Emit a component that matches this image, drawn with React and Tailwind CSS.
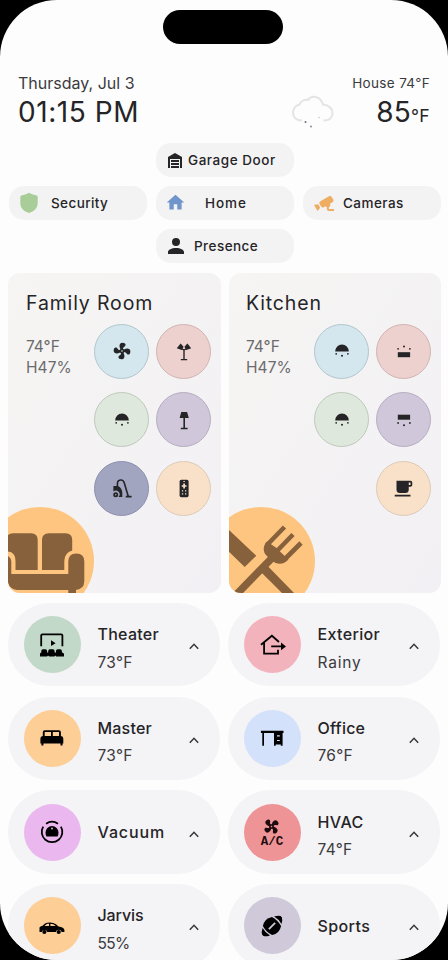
import React from "react";

const Svg = ({ size = 24, box = 24, className = "", children }) => (
  <svg width={size} height={size} viewBox={`0 0 ${box} ${box}`} className={`shrink-0 ${className}`} fill="currentColor">
    {children}
  </svg>
);

const FAN =
  "M12,11A1,1 0 0,0 11,12A1,1 0 0,0 12,13A1,1 0 0,0 13,12A1,1 0 0,0 12,11M12.5,2C17,2 17.11,5.57 14.75,6.75C13.76,7.24 13.32,8.29 13.13,9.22C13.61,9.42 14.03,9.73 14.35,10.13C18.05,8.13 22.03,8.92 22.03,12.5C22.03,17 18.46,17.1 17.28,14.73C16.78,13.74 15.72,13.3 14.79,13.11C14.59,13.59 14.28,14 13.88,14.34C15.87,18.03 15.08,22 11.5,22C7,22 6.91,18.42 9.27,17.24C10.25,16.75 10.69,15.71 10.89,14.79C10.4,14.59 9.97,14.27 9.65,13.87C5.96,15.85 2,15.07 2,11.5C2,7 5.56,6.89 6.74,9.26C7.24,10.25 8.29,10.68 9.22,10.87C9.41,10.39 9.73,9.97 10.14,9.65C8.15,5.96 8.94,2 12.5,2Z";

const Garage = () => (
  <Svg><path d="M19,20H17V11H7V20H5V9L12,5L19,9V20M8,12H16V14H8V12M8,15H16V17H8V15M16,18V20H8V18H16Z" /></Svg>
);
const Shield = () => (
  <Svg className="text-[#a8cd98]"><path d="M12,1.8C14.5,3.4 17.5,4.2 19.6,4.4Q20.7,4.6 20.7,5.800V12C20.7,16.8 17.2,20.6 12,22C6.800,20.6 3.3,16.8 3.3,12V5.8Q3.3,4.6 4.400,4.4C6.500,4.2 9.5,3.4 12,1.8Z" /></Svg>
);
const House = () => (
  <Svg size={21} className="text-[#7095cb]"><path d="M10,20V14H14V20H19V12H22L12,3L2,12H5V20H10Z" /></Svg>
);
const Camera = () => (
  <Svg size={24} className="text-[#efad62]">
    <path d="M18.15,4.94C17.77,4.91 17.37,5 17,5.2L8.35,10.2C7.39,10.76 7.07,12 7.62,12.94L9.12,15.53C9.67,16.5 10.89,16.82 11.85,16.27L13.65,15.23C13.92,15.69 14.32,16.06 14.81,16.27V18.04C14.81,19.13 15.7,20 16.81,20H22V18.04H16.81V16.27C17.72,15.87 18.31,14.97 18.31,14C18.31,13.54 18.19,13.11 17.97,12.73L20.5,11.27C21.47,10.71 21.8,9.5 21.24,8.53L19.74,5.94C19.4,5.34 18.79,5 18.15,4.94M6.22,13.17L2,13.87L2.75,15.17L4.75,18.63L5.5,19.93L8.22,16.63L6.22,13.17Z" />
  </Svg>
);
const Person = () => (
  <Svg size={24}><path d="M12,4A4,4 0 0,1 16,8A4,4 0 0,1 12,12A4,4 0 0,1 8,8A4,4 0 0,1 12,4M12,14C16.42,14 20,15.79 20,18V20H4V18C4,15.79 7.58,14 12,14Z" /></Svg>
);

const Fan = () => <Svg size={20}><path d={FAN} /></Svg>;
const TwinLamp = () => (
  <Svg>
    <path d="M8.6,4.6L4.8,9.3L9.6,11L11.6,7.8ZM15.4,4.6L19.2,9.300L14.4,11L12.4,7.8Z" />
    <path d="M9.6,9.600L12,11L14.4,9.6M12,11V20.5M8.8,20.6H15.2" stroke="currentColor" strokeWidth="1.4" fill="none" />
  </Svg>
);
const Dome = () => (
  <Svg>
    <path d="M5.2,12.6A6.8,7.2 0 0,1 18.8,12.6Z" />
    <circle cx="6.2" cy="14.8" r="0.9" /><circle cx="12" cy="16.7" r="1" /><circle cx="17.900" cy="14.8" r="0.9" />
  </Svg>
);
const FloorLamp = () => (
  <Svg><path d="M9.3,4H15.1L16.8,10.1H7.6ZM11.4,10H13V19.8H15.600V21.2H8.8V19.8H11.4Z" /></Svg>
);
const Hoover = () => (
  <Svg>
    <path fillRule="evenodd" d="M3.4,10H7C10.5,10.5 12.3,13.5 12.3,17V20.9H8.4A3.400,3.400 0 1,0 3.4,15.600ZM5.700,16.2A2.500,2.500 0 1,1 5.7,21.2A2.5,2.5 0 1,1 5.7,16.2M5.7,17.9A0.800,0.800 0 1,0 5.7,19.500A0.8,0.8 0 1,0 5.7,17.9" />
    <path d="M7.4,11V8C7.4,3 13.2,2.800 14.3,7L18.3,20.4M15.8,20.600H21.600" stroke="currentColor" strokeWidth="1.6" fill="none" />
  </Svg>
);
const Remote = () => (
  <Svg>
    <rect x="7.600" y="3.8" width="9" height="17.4" rx="1.6" />
    <path d="M12.1,7.6V12.4M9.7,10H14.5" stroke="#f9e1c9" strokeWidth="1.7" />
    <path d="M9.9,14.3H11.2V15.6H9.9ZM13,14.3H14.3V15.6H13ZM9.900,17.2H11.2V18.5H9.9ZM13,17.2H14.3V18.5H13ZM11.4,5H12.8V6H11.4Z" fill="#f9e1c9" />
  </Svg>
);
const UpLight = () => (
  <Svg>
    <rect x="5.800" y="13.2" width="12.300" height="5" />
    <circle cx="6.1" cy="9.8" r="0.9" /><circle cx="12" cy="7.6" r="1" /><circle cx="17.9" cy="9.8" r="0.9" />
  </Svg>
);
const DownLight = () => (
  <Svg>
    <rect x="5.8" y="6.7" width="12.3" height="5" />
    <circle cx="6.1" cy="15" r="0.9" /><circle cx="12" cy="17.2" r="1" /><circle cx="17.9" cy="15" r="0.900" />
  </Svg>
);
const Cup = () => (
  <Svg size={21}><path d="M2,21H20V19H2M20,8H18V5H20M20,3H4V13A4,4 0 0,0 8,17H14A4,4 0 0,0 18,13V10H20A2,2 0 0,0 22,8V5C22,3.89 21.1,3 20,3Z" /></Svg>
);

const Theater = () => (
  <Svg size={28} box={28}>
    <path d="M3.2,15.300V4.5Q3.2,3.300 4.4,3.3H23.2Q24.4,3.3 24.4,4.5V15.300" stroke="currentColor" strokeWidth="1.800" fill="none" />
    <path d="M13,9.300L17.6,12.2L13,15Z" />
    <path d="M2,25.5V23.2Q2,21.6 3.300,21.600V20Q3.3,18.3 5,18.3H7.4Q9.1,18.3 9.1,20V21.6H10.200V20Q10.2,18.3 11.900,18.3H14.9Q16.6,18.3 16.6,20V21.6H18V20Q18,18.3 19.7,18.3H22.2Q23.900,18.3 23.9,20V21.6Q26,21.6 26,23.2V25.5H18.2L17.3,24.500L16.400,25.5H11.200L10,24.5L9.2,25.5Z" />
  </Svg>
);
const Bed = () => (
  <Svg size={28} box={28}>
    <path fillRule="evenodd" d="M4.800,12V8.2Q4.8,6.2 6.800,6.2H20.900Q22.9,6.2 22.9,8.2V12Q25.3,12.300 25.3,14.5V19.4H24.5V21.6H22.5V19.400H5.4V21.600H3.4V19.4H2.400V14.5Q2.4,12.3 4.800,12ZM6.700,8.1V12H13V8.1ZM14.800,8.1V12H21V8.1Z" />
  </Svg>
);
const Exterior = () => (
  <Svg size={28} box={28}>
    <path d="M3,13.700L13.9,4.8L21,11M6.100,12V22.700H20V18.800" stroke="currentColor" strokeWidth="1.8" fill="none" />
    <path d="M13.2,14.600H23V11.6L28,15.5L23,19.200V16.300H13.200Z" />
  </Svg>
);
const Desk = () => (
  <Svg size={28} box={28}>
    <path fillRule="evenodd" d="M2.900,6.8H25.500V8.900H24.6V21.8H22.800V20.600H17.700V21.8H16V8.9H6V21.8H4.3V8.9H2.9ZM19,11.2V12.4H21.800V11.2ZM19,15.900V17.1H21.800V15.9Z" />
  </Svg>
);
const Robot = () => (
  <Svg size={28} box={28}>
    <path d="M8.1,5.800A10.300,10.300 0 0,1 20,5.8M5.200,8.600A10.3,10.3 0 1,0 22.900,8.6" stroke="currentColor" strokeWidth="1.8" fill="none" />
    <path fillRule="evenodd" d="M8.500,18.500Q7.500,17 7.5,14.600A6.500,6.600 0 0,1 20.500,14.6Q20.5,17 19.5,18.5ZM14,9.600A0.900,0.900 0 1,0 14,11.400A0.9,0.9 0 1,0 14,9.6Z" />
  </Svg>
);
const Car = () => (
  <Svg size={28} box={28}>
    <path fillRule="evenodd" d="M1.500,15.500Q2,14.200 4.500,13.800L7,11.600Q8.500,10.400 12,10.400Q15.500,10.4 18,12.200L20.500,14.400Q26,15 26.400,18V20H23.600A3,3 0 0,0 17.800,20H9.300A3,3 0 0,0 3.600,20H1.500ZM6.500,14H11V11.8H9.500Q8.300,12 6.5,14ZM12.400,11.8V14H17.800Q15.500,11.8 12.4,11.8Z" />
    <circle cx="6.400" cy="20" r="2.100" /><circle cx="20.700" cy="20" r="2.100" />
  </Svg>
);
const Hvac = () => (
  <div className="flex flex-col items-center text-[#1d0b0e]">
    <Svg size={19}><path d={FAN} transform="rotate(45 12 12)" /></Svg>
    <span className="h-[11px] font-['Liberation_Mono',monospace] text-[12.5px] leading-[12px] font-bold">A/C</span>
  </div>
);
const Football = () => (
  <Svg size={28} box={28}>
    <g transform="rotate(-45 14 14)">
      <path d="M7.600,7.500Q14,3.300 20.400,7.5Q22.400,14 20.4,20.500Q14,24.700 7.6,20.5Q5.600,14 7.6,7.5Z" />
      <path d="M5.900,8.800Q2.300,10.500 0.900,13V15Q2.3,17.500 5.900,19.200Q4.400,14 5.9,8.8ZM22.100,8.8Q25.700,10.500 27.100,13V15Q25.7,17.5 22.1,19.2Q23.600,14 22.1,8.8Z" />
      <rect x="9.600" y="13.100" width="8.800" height="1.800" fill="#d0c9da" />
    </g>
  </Svg>
);

const Chip = ({ icon, label, pad, gap, track }) => (
  <div className={`flex h-[33.500px] w-[138px] items-center rounded-[15px] bg-[#f4f3f4] ${pad}`}>
    {icon}
    <span className={`text-[13.5px] leading-5 font-medium whitespace-nowrap ${gap} ${track}`}>{label}</span>
  </div>
);

const Spot = ({ color, children }) => (
  <div className={`flex size-[55px] items-center justify-center rounded-full border ${color}`}>{children}</div>
);

const BLUE = "bg-[#d4e7ee] border-[#b3c6cd]";
const PINK = "bg-[#edd1ce] border-[#d1b4b2]";
const GREEN = "bg-[#dfe8dc] border-[#bdc9bb]";
const PURPLE = "bg-[#d0c7da] border-[#b6adc1]";
const INDIGO = "bg-[#a2a5c0] border-[#8c8fae]";
const PEACH = "bg-[#f9e1c9] border-[#dcc9b6]";

const Sofa = () => (
  <svg viewBox="0 0 86 86" className="absolute bottom-0 left-0 size-[86px] fill-[#87603c]">
    <path d="M0,28Q2,26.300 5,26.300H23Q29.700,26.300 29.700,33V63H7.500V54Q7.500,45 0,44.500Z" />
    <path d="M34,63V33Q34,26.300 41,26.300H57.500Q64.200,26.300 64.200,33V43.500Q56.300,46 56.300,54V63Z" />
    <path d="M0,49Q3.300,51 3.300,55V67H60.300V54.500Q60.300,46.500 68.300,46.500Q76.300,46.500 76.300,54.500V74Q76.300,82 68,83V86H60.300V83H9Q2,82 0,76Z" />
  </svg>
);
const Cutlery = () => (
  <svg viewBox="0 0 86 86" className="absolute bottom-0 left-0 size-[86px] fill-[#87603c]">
    <path d="M0,23L27.300,48.700L15.700,60L0,44.700ZM37.700,58L65,86H53L31.700,64.700Z" />
    <path d="M4,91L44,50" stroke="#87603c" strokeWidth="7.500" />
    <path d="M55.500,20L38,38M64,27.500L47,45M72,36L55,53" stroke="#87603c" strokeWidth="4.600" />
    <path d="M38,34.500L47.500,41L52,45.500L59.500,52.500C54.500,58 48,57.500 43,54L37.500,48.500C33.500,44.500 34,38.500 38,34.500Z" />
  </svg>
);

const Room = ({ title, width, inset, children, art }) => (
  <section className={`relative h-[320px] overflow-hidden rounded-[12px] bg-linear-to-br from-[#f6f5f3] to-[#f2f0f4] ${width}`}>
    <h2 className={`pt-[17px] text-[19.5px] leading-[26px] tracking-[0.85px] ${inset}`}>{title}</h2>
    <div className={`mt-2 flex justify-between pr-[10px] ${inset}`}>
      <div className="pt-[12px] text-[15.5px] leading-[21px] text-[#6b6a6c]">
        <p>74°F</p>
        <p className="tracking-[0.1px]">H47%</p>
      </div>
      <div className="grid grid-cols-[55px_55px] gap-x-[7px] gap-y-[13.500px]">{children}</div>
    </div>
    <div className="absolute top-[234px] -left-[22px] size-[108px] rounded-full bg-[#fdc580]" />
    {art}
  </section>
);

const Chevron = () => (
  <svg width="10" height="7" viewBox="0 0 10 7" className="mt-1 shrink-0" fill="none" stroke="#39383b" strokeWidth="1.500">
    <path d="M0.800,5.700L5,1.300L9.200,5.700" />
  </svg>
);

const Tile = ({ icon, color, name, info, track = "", infoTrack = "tracking-[0.3px]" }) => (
  <div className="flex h-[83.500px] w-[212px] items-center rounded-[42px] bg-[#f4f3f5] pr-[21px] pl-[15.500px]">
    <div className={`flex size-[57px] shrink-0 items-center justify-center rounded-full text-black ${color}`}>{icon}</div>
    <div className={`ml-[17px] flex-1 leading-[28.500px] ${info ? "pt-[8px]" : ""}`}>
      <p className={`text-[16px] font-medium ${track}`}>{name}</p>
      {info && <p className={`text-[15.5px] text-[#3b3a3d] ${infoTrack}`}>{info}</p>}
    </div>
    <Chevron />
  </div>
);

export default function App() {
  return (
    <div className="h-[960px] w-[448px] overflow-hidden bg-black">
      <main className="flex h-[960px] flex-col overflow-hidden rounded-[57px] bg-[#fdfdfd] font-['Inter','Open_Sans',sans-serif] text-[#252427]">
        <div className="mt-[10px] ml-[163px] h-[34px] w-[120px] shrink-0 rounded-full bg-black" />

        <header className="mt-[27px] flex h-[72px] shrink-0 justify-between pr-[18px] pl-[18px]">
          <div>
            <p className="text-[16px] leading-6 text-[#3b3a3d]">Thursday, Jul 3</p>
            <p className="text-[28px] leading-[34px] tracking-[0.55px]">01:15 PM</p>
          </div>
          <div className="flex">
            <svg width="44" height="38" viewBox="0 0 44 38" className="mt-[22px] mr-[13px]" fill="none">
              <path d="M11,27.500C5,27.500 2,24 2,19.500C2,15 5.500,12 8.500,11.500C10,7.500 14,6.500 17,7C20,2.500 29,2 32,11.500C38,12 42,16 41.500,21C41,25 38,27.500 32.500,27.500" stroke="#e5e3e4" strokeWidth="2" />
              <circle cx="14.500" cy="29" r="1" fill="#6b7480" /><circle cx="20" cy="33.500" r="1" fill="#858c98" /><circle cx="28" cy="24.500" r="0.700" fill="#b9bec8" />
            </svg>
            <div className="flex w-[82px] flex-col items-end">
              <p className="text-[13.500px] leading-6 tracking-[0.35px] whitespace-nowrap text-[#3b3a3d]">House 74°F</p>
              <p className="text-[28px] leading-[34px] tracking-[0.300px] whitespace-nowrap">
                85<span className="text-[17.5px]">°F</span>
              </p>
            </div>
          </div>
        </header>

        <nav className="flex shrink-0 flex-col items-center gap-[9.700px] pl-[2px]">
          <Chip icon={<Garage />} label="Garage Door" pad="pl-[7px]" gap="ml-[1px]" track="tracking-[0.55px]" />
          <div className="flex gap-[9px]">
            <Chip icon={<Shield />} label="Security" pad="pl-[8px]" gap="ml-[10px]" track="tracking-[0.4px]" />
            <Chip icon={<House />} label="Home" pad="pl-[9px]" gap="ml-[19px]" track="tracking-[0.9px]" />
            <Chip icon={<Camera />} label="Cameras" pad="pl-[9px]" gap="ml-[7px]" track="tracking-[0.45px]" />
          </div>
          <Chip icon={<Person />} label="Presence" pad="pl-[8px]" gap="ml-[6px]" track="tracking-[0.45px]" />
        </nav>

        <div className="mt-[10.100px] flex shrink-0 gap-2 pl-2">
          <Room title="Family Room" width="w-[213px]" inset="pl-[18px]" art={<Sofa />}>
            <Spot color={BLUE}><Fan /></Spot>
            <Spot color={PINK}><TwinLamp /></Spot>
            <Spot color={GREEN}><Dome /></Spot>
            <Spot color={PURPLE}><FloorLamp /></Spot>
            <Spot color={INDIGO}><Hoover /></Spot>
            <Spot color={PEACH}><Remote /></Spot>
          </Room>
          <Room title="Kitchen" width="w-[212px]" inset="pl-[17px]" art={<Cutlery />}>
            <Spot color={BLUE}><Dome /></Spot>
            <Spot color={PINK}><UpLight /></Spot>
            <Spot color={GREEN}><Dome /></Spot>
            <Spot color={PURPLE}><DownLight /></Spot>
            <span />
            <Spot color={PEACH}><Cup /></Spot>
          </Room>
        </div>

        <div className="mt-[10px] grid shrink-0 grid-cols-[212px_212px] gap-x-2 gap-y-[10.200px] pl-2">
          <Tile icon={<Theater />} color="bg-[#c2d8c8]" name="Theater" info="73°F" track="tracking-[0.25px]" />
          <Tile icon={<Exterior />} color="bg-[#f3b3bd]" name="Exterior" info="Rainy" track="tracking-[0.35px]" infoTrack="tracking-[0.8px]" />
          <Tile icon={<Bed />} color="bg-[#fdce96]" name="Master" info="73°F" track="tracking-[0.2px]" />
          <Tile icon={<Desk />} color="bg-[#d4e1fa]" name="Office" info="76°F" track="tracking-[0.2px]" />
          <Tile icon={<Robot />} color="bg-[#ebb7ef]" name="Vacuum" track="tracking-[0.9px]" />
          <Tile icon={<Hvac />} color="bg-[#ee9496]" name="HVAC" info="74°F" track="tracking-[0.4px]" />
          <Tile icon={<Car />} color="bg-[#fdce96]" name="Jarvis" info="55%" track="tracking-[-0.1px]" infoTrack="tracking-[-0.7px]" />
          <Tile icon={<Football />} color="bg-[#d0c9da]" name="Sports" track="tracking-[0.4px]" />
        </div>
      </main>
    </div>
  );
}
